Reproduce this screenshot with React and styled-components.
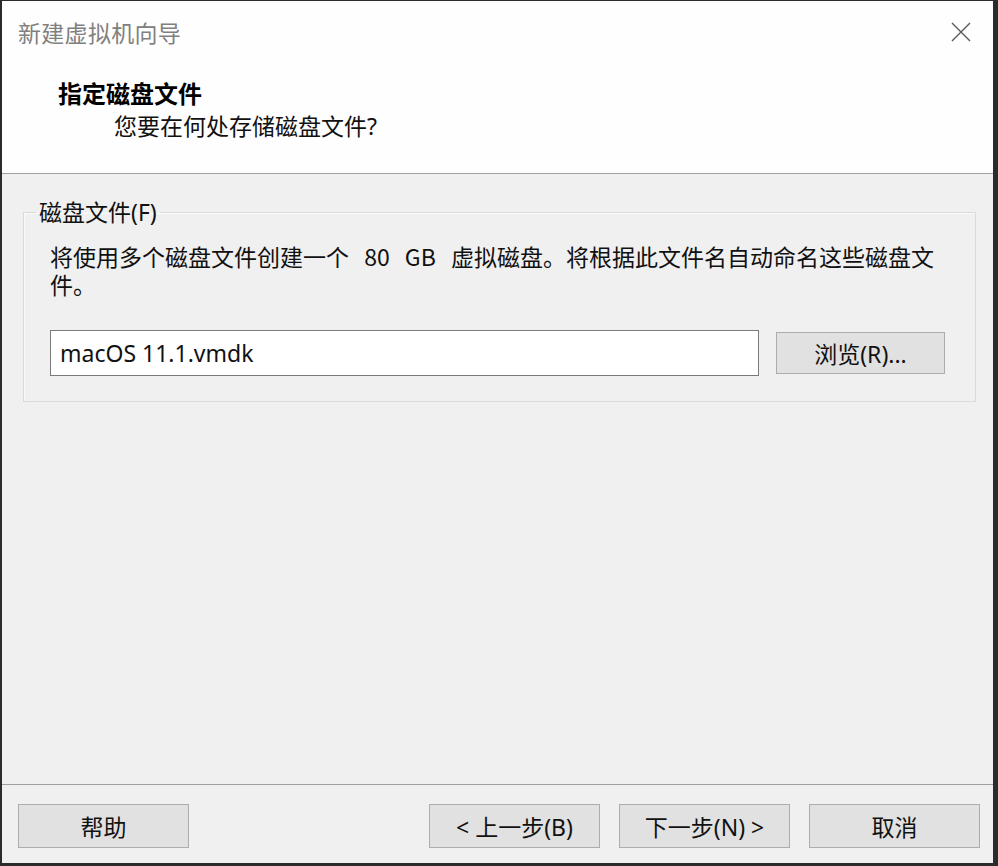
import React, { useState } from 'react'
import styled, { createGlobalStyle } from 'styled-components'

const GlobalStyle = createGlobalStyle`
  html, body {
    margin: 0;
    padding: 0;
    background: #2a2a2a;
  }
  * {
    box-sizing: border-box;
  }
`;

const fontStack = `"Noto Sans", "Noto Sans CJK SC", sans-serif`;

const Window = styled.div`
  width: 998px;
  height: 866px;
  display: flex;
  flex-direction: column;
  border-style: solid;
  border-color: #2b2b2b;
  border-width: 1px 5px 3px 2px;
  background: #f0f0f0;
  font-family: ${fontStack};
  color: #111;
  overflow: hidden;
`;

const Header = styled.div`
  height: 173px;
  background: #fefefe;
  border-bottom: 1px solid #a0a0a0;
  display: flex;
  flex-direction: column;
`;

const TitleBar = styled.div`
  height: 62px;
  display: flex;
  align-items: center;
  justify-content: space-between;
  padding: 0 16px 0 16px;
`;

const WindowTitle = styled.div`
  font-size: 23px;
  color: #808080;
  letter-spacing: 0.3px;
`;

const CloseButton = styled.button`
  width: 32px;
  height: 32px;
  border: none;
  background: transparent;
  display: flex;
  align-items: center;
  justify-content: center;
  padding: 0;
  cursor: pointer;
`;

const Heading = styled.div`
  margin: 14px 0 0 56px;
`;

const HeadingTitle = styled.div`
  font-size: 24px;
  font-weight: 700;
  line-height: 33px;
  color: #000;
`;

const HeadingSub = styled.div`
  font-size: 23px;
  line-height: 33px;
  margin-left: 56px;
`;

const Body = styled.div`
  flex: 1;
  padding: 24px 17px 0 21px;
`;

const GroupBox = styled.fieldset`
  margin: 0;
  padding: 0 20px 25px 26px;
  border: 1px solid #dadada;
  box-shadow: inset 1px 1px 0 #fafafa;
  min-width: 0;
`;

const Legend = styled.legend`
  font-size: 23px;
  line-height: 28px;
  padding: 0 3px;
  margin-left: -14px;
`;

const Description = styled.p`
  margin: 16px 0 0 0;
  font-family: "Noto Sans CJK SC", sans-serif;
  font-size: 23px;
  line-height: 28px;
  word-spacing: 10px;
`;

const FileRow = styled.div`
  display: flex;
  align-items: center;
  gap: 17px;
  margin-top: 32px;
`;

const FileInput = styled.input`
  width: 709px;
  height: 46px;
  border: 1px solid #7a7a7a;
  background: #fff;
  padding: 0 9px;
  font-family: ${fontStack};
  font-size: 23px;
  color: #111;
  outline: none;
`;

const Button = styled.button`
  width: ${p => p.$w || 171}px;
  height: ${p => p.$h || 44}px;
  background: #e1e1e1;
  border: 1px solid #adadad;
  font-family: ${fontStack};
  font-size: 23px;
  color: #111;
  padding: 0;
  cursor: pointer;
  &:hover {
    background: #e5f1fb;
    border-color: #0078d7;
  }
`;

const Footer = styled.div`
  height: 79px;
  border-top: 1px solid #a0a0a0;
  display: flex;
  align-items: flex-start;
  justify-content: space-between;
  padding: 19px 13px 0 16px;
`;

const NavGroup = styled.div`
  display: flex;
  gap: 19px;
`;

const CloseIcon = () => (
  <svg width="22" height="22" viewBox="0 0 22 22">
    <path d="M2 2 L20 20 M20 2 L2 20" stroke="#5a5a5a" strokeWidth="1.4" fill="none" />
  </svg>
);

const App = () => {
  const [fileName, setFileName] = useState("macOS 11.1.vmdk");

  return (
    <>
      <GlobalStyle />
      <Window>
        <Header>
          <TitleBar>
            <WindowTitle>新建虚拟机向导</WindowTitle>
            <CloseButton aria-label="关闭">
              <CloseIcon />
            </CloseButton>
          </TitleBar>
          <Heading>
            <HeadingTitle>指定磁盘文件</HeadingTitle>
            <HeadingSub>您要在何处存储磁盘文件?</HeadingSub>
          </Heading>
        </Header>
        <Body>
          <GroupBox>
            <Legend>磁盘文件(F)</Legend>
            <Description>
              将使用多个磁盘文件创建一个 80 GB 虚拟磁盘。将根据此文件名自动命名这些磁盘文件。
            </Description>
            <FileRow>
              <FileInput value={fileName} onChange={e => setFileName(e.target.value)} />
              <Button $w={169} $h={42}>浏览(R)...</Button>
            </FileRow>
          </GroupBox>
        </Body>
        <Footer>
          <Button>帮助</Button>
          <NavGroup>
            <Button>&lt; 上一步(B)</Button>
            <Button>下一步(N) &gt;</Button>
            <Button>取消</Button>
          </NavGroup>
        </Footer>
      </Window>
    </>
  )
}

export default App
